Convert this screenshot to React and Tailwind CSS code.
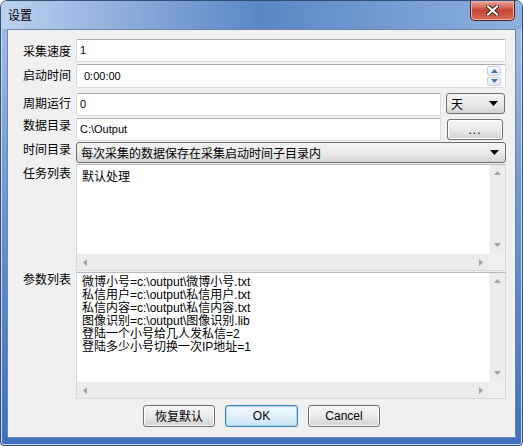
import React from 'react';

const cjk = "font-['Noto_Sans_CJK_SC',sans-serif]";
const mixed = "font-['Liberation_Sans','Noto_Sans_CJK_SC',sans-serif]";

const Label = ({ children, className = '' }) => (
  <div className={`w-[53px] shrink-0 text-[12px] leading-[14px] text-black ${cjk} ${className}`}>{children}</div>
);

const Field = ({ children, className = '' }) => (
  <div
    className={`flex items-center bg-white border border-[#d8dce2] border-t-[#abadb3] rounded-[2px] text-[11px] text-black ${mixed} ${className}`}
  >
    {children}
  </div>
);

const DownArrow = () => (
  <svg width="9" height="5" viewBox="0 0 9 5">
    <path d="M0 0h9L4.5 5z" fill="#000" />
  </svg>
);

const Combo = ({ children, className = '' }) => (
  <div
    className={`flex items-center justify-between border border-[#707070] rounded-[3px] bg-gradient-to-b from-[#f2f2f2] via-[#ebebeb] to-[#d4d4d4] pl-[4px] pr-[6px] ${cjk} text-[12px] text-black ${className}`}
  >
    <span>{children}</span>
    <DownArrow />
  </div>
);

const Button = ({ children, primary, className = '' }) => (
  <div
    className={`flex items-center justify-center rounded-[3px] border text-[12px] text-black ${mixed} ${
      primary
        ? 'border-[#3c7fb1] bg-gradient-to-b from-[#f0f8fd] via-[#e2f1fb] to-[#c6e3f6] shadow-[inset_0_0_0_1px_#a9dcf8]'
        : 'border-[#707070] bg-gradient-to-b from-[#f4f4f4] via-[#ebebeb] to-[#d0d0d0] shadow-[inset_0_0_0_1px_#fcfcfc]'
    } ${className}`}
  >
    {children}
  </div>
);

const Tri = ({ dir }) => {
  const d = {
    up: 'M0 4h7L3.5 0z',
    down: 'M0 0h7L3.5 4z',
    left: 'M4 0v7L0 3.5z',
    right: 'M0 0v7L4 3.5z',
  }[dir];
  const w = dir === 'up' || dir === 'down' ? 7 : 4;
  const h = dir === 'up' || dir === 'down' ? 4 : 7;
  return (
    <svg width={w} height={h} viewBox={`0 0 ${w} ${h}`}>
      <path d={d} fill="#a3a3a3" />
    </svg>
  );
};

const ScrollBox = ({ children, className = '' }) => (
  <div className={`flex flex-col border border-[#d5d9de] border-t-[#b8bcc2] bg-white ${className}`}>
    <div className="flex flex-1 min-h-0">
      <div className={`flex-1 pl-[5px] pt-[4px] text-[12px] leading-[13px] text-black ${mixed}`}>{children}</div>
      <div className="w-[16px] flex flex-col items-center justify-between bg-[#ececec] border-l border-[#f6f6f6] py-[6px]">
        <Tri dir="up" />
        <Tri dir="down" />
      </div>
    </div>
    <div className="flex h-[17px]">
      <div className="flex-1 flex items-center justify-between bg-[#ececec] border-t border-[#f6f6f6] px-[6px]">
        <Tri dir="left" />
        <Tri dir="right" />
      </div>
      <div className="w-[16px] bg-[#f0f0f0]" />
    </div>
  </div>
);

export default function App() {
  return (
    <div className="w-[523px] h-[446px] overflow-hidden bg-white">
      <div className="w-[523px] h-[446px] flex flex-col rounded-t-[7px] rounded-b-[4px] border border-[#34507a] bg-gradient-to-b from-[#a7c1e5] via-[#6a91cc] to-[#3f70be] shadow-[inset_0_0_0_1px_#c9dbf1]">
        {/* title bar */}
        <div className="h-[28px] flex items-start justify-between rounded-t-[6px] bg-gradient-to-r from-[#bcd1ee] via-[#5b86c6] to-[#8eb0de]">
          <div className={`pl-[7px] pt-[7px] text-[12px] leading-[14px] text-black ${cjk}`}>设置</div>
          <div className="mr-[7px] w-[45px] h-[20px] flex items-center justify-center rounded-b-[5px] border border-t-0 border-[#5c2019] bg-gradient-to-b from-[#e8a89b] via-[#c74636] to-[#d66a57] shadow-[inset_0_0_0_1px_#eab3a8]">
            <svg width="13" height="11" viewBox="0 0 13 11">
              <path d="M2 1.5l9 8M11 1.5l-9 8" stroke="#3b1a15" strokeWidth="4" strokeLinecap="square" />
              <path d="M2 1.5l9 8M11 1.5l-9 8" stroke="#ffffff" strokeWidth="2.2" strokeLinecap="square" />
            </svg>
          </div>
        </div>

        {/* client area */}
        <div className="mx-[6px] h-[409px] border border-[#6e86aa] bg-[#f0f0f0] pl-[15px] pr-[9px] flex flex-col">
          <div className="mt-[9px] flex items-start">
            <Label className="mt-[5px]">采集速度</Label>
            <Field className="flex-1 h-[23px] pl-[3px]">1</Field>
          </div>

          <div className="mt-[2px] flex items-start">
            <Label className="mt-[4px]">启动时间</Label>
            <Field className="flex-1 h-[24px] pl-[7px] pr-[4px] justify-between">
              <span>0:00:00</span>
              <div className="flex flex-col w-[14px] h-[20px] gap-[1px]">
                <div className="flex-1 flex items-center justify-center rounded-[2px] border border-[#c9d3de] bg-gradient-to-b from-[#f6f8fb] to-[#e2e8ef]">
                  <svg width="7" height="4" viewBox="0 0 7 4"><path d="M0 4h7L3.5 0z" fill="#4a6fb0" /></svg>
                </div>
                <div className="flex-1 flex items-center justify-center rounded-[2px] border border-[#c9d3de] bg-gradient-to-b from-[#f6f8fb] to-[#e2e8ef]">
                  <svg width="7" height="4" viewBox="0 0 7 4"><path d="M0 0h7L3.5 4z" fill="#4a6fb0" /></svg>
                </div>
              </div>
            </Field>
          </div>

          <div className="mt-[5px] flex items-start">
            <Label className="mt-[3px]">周期运行</Label>
            <Field className="w-[365px] h-[23px] pl-[3px]">0</Field>
            <Combo className="ml-[5px] w-[59px] h-[21px]">天</Combo>
          </div>

          <div className="mt-[2px] flex items-start">
            <Label className="mt-[0px]">数据目录</Label>
            <Field className="w-[365px] h-[23px] pl-[3px]">C:\Output</Field>
            <Button className="ml-[6px] mt-[1px] w-[56px] h-[21px] tracking-[1px]">...</Button>
          </div>

          <div className="mt-[1px] flex items-start">
            <Label className="mt-[0px]">时间目录</Label>
            <Combo className="flex-1 h-[21px]">每次采集的数据保存在采集启动时间子目录内</Combo>
          </div>

          <div className="mt-[1px] flex items-start">
            <Label className="mt-[2px]">任务列表</Label>
            <ScrollBox className="flex-1 h-[107px]">
              <div className={cjk}>默认处理</div>
            </ScrollBox>
          </div>

          <div className="mt-[1px] flex items-start">
            <Label className="mt-[0px]">参数列表</Label>
            <ScrollBox className="flex-1 h-[127px]">
              <div className="-mt-[1px]">微博小号=c:\output\微博小号.txt</div>
              <div>私信用户=c:\output\私信用户.txt</div>
              <div>私信内容=c:\output\私信内容.txt</div>
              <div>图像识别=c:\output\图像识别.lib</div>
              <div>登陆一个小号给几人发私信=2</div>
              <div>登陆多少小号切换一次IP地址=1</div>
            </ScrollBox>
          </div>

          <div className="mt-[6px] flex justify-center gap-[10px] pr-[6px]">
            <Button className={`w-[72px] h-[22px] ${cjk}`}>恢复默认</Button>
            <Button primary className="w-[73px] h-[22px]">OK</Button>
            <Button className="w-[72px] h-[22px]">Cancel</Button>
          </div>
        </div>
      </div>
    </div>
  );
}
